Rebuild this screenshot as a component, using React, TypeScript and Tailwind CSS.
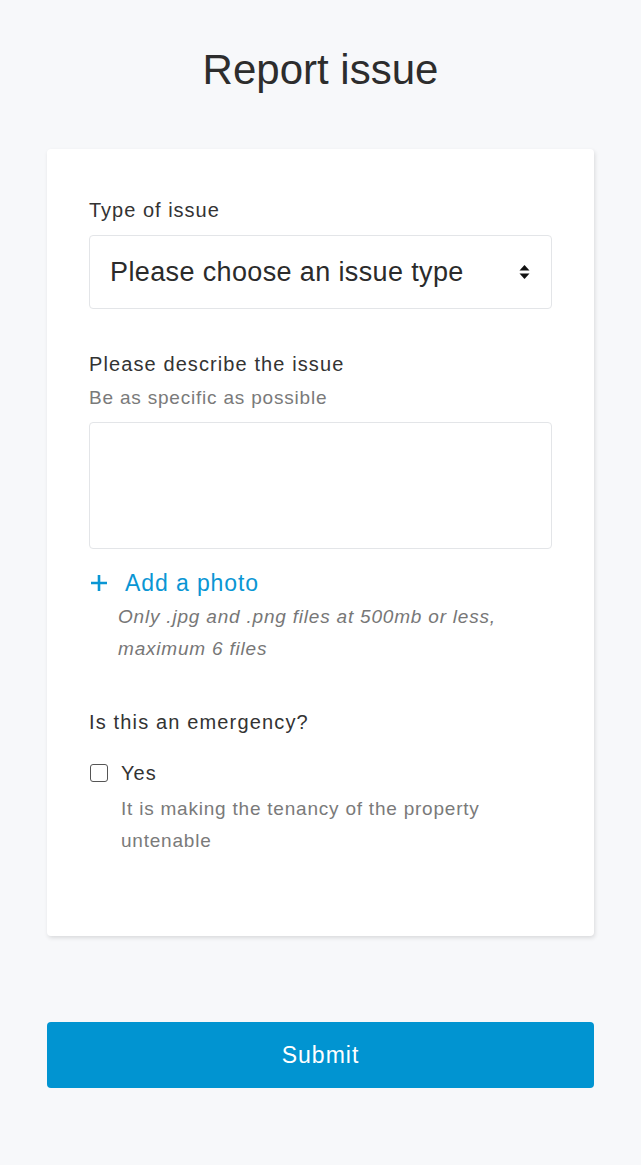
import React from "react";

export default function App() {
  return (
    <div
      className="min-h-[1165px] w-full bg-[#f7f8fa] text-[#333333]"
      style={{ fontFamily: '"Liberation Sans", Arial, Helvetica, sans-serif' }}
    >
      <div className="px-[47px]">
        <h1 className="pt-[42px] pb-[51px] text-center text-[42px] leading-[56px] font-normal text-[#2d2d2d]">
          Report issue
        </h1>

        <div className="rounded-[4px] bg-white px-[42px] pt-[47px] pb-[79px] shadow-[1px_2px_4px_rgba(0,0,0,0.12)]">
          <label className="block text-[20px] leading-[28px] tracking-[1px]">Type of issue</label>
          <div className="mt-[11px] flex h-[74px] items-center justify-between rounded-[4px] border border-[#e3e5e8] bg-white pl-[20px] pr-[20px]">
            <span className="text-[27px] leading-[32px] tracking-[0.37px] text-[#2b2b2b]">Please choose an issue type</span>
            <svg width="11" height="16" viewBox="0 0 11 16" className="mr-[1px]">
              <path d="M5.5 1 L10.5 6.5 H0.5 Z" fill="#111" />
              <path d="M5.5 15 L10.5 9.5 H0.5 Z" fill="#111" />
            </svg>
          </div>

          <label className="mt-[41px] block text-[20px] leading-[28px] tracking-[1.1px]">Please describe the issue</label>
          <div className="mt-[7px] text-[19px] leading-[26px] tracking-[0.8px] text-[#7a7a7a]">Be as specific as possible</div>
          <div className="mt-[11px] h-[127px] rounded-[4px] border border-[#e3e5e8] bg-white" />

          <div className="mt-[19px] flex items-center text-[#0a96d4]">
            <svg width="18" height="18" viewBox="0 0 18 18" className="ml-[1px]">
              <path d="M9 1 V17 M1 9 H17" stroke="#0a96d4" strokeWidth="2.6" />
            </svg>
            <span className="ml-[17px] text-[23px] leading-[30px] tracking-[0.9px]">Add a photo</span>
          </div>
          <p className="mt-[3px] pl-[29px] text-[19px] italic leading-[32px] tracking-[0.8px] text-[#777777]">
            Only .jpg and .png files at 500mb or less,
            <br />
            maximum 6 files
          </p>

          <div className="mt-[43px] text-[20px] leading-[28px] tracking-[1.15px]">Is this an emergency?</div>
          <div className="mt-[23px] flex items-center">
            <span className="ml-[1px] inline-block h-[18px] w-[18px] rounded-[3px] border-[1.5px] border-[#555]" />
            <span className="ml-[13px] text-[20px] leading-[28px] tracking-[1px]">Yes</span>
          </div>
          <p className="mt-[6px] pl-[32px] text-[19px] leading-[32px] tracking-[0.78px] text-[#7a7a7a]">
            It is making the tenancy of the property
            <br />
            untenable
          </p>
        </div>

        <button className="mt-[86px] flex h-[66px] w-full items-center justify-center rounded-[4px] bg-[#0194d1] text-[23px] tracking-[1px] text-white">
          Submit
        </button>
      </div>
    </div>
  );
}
